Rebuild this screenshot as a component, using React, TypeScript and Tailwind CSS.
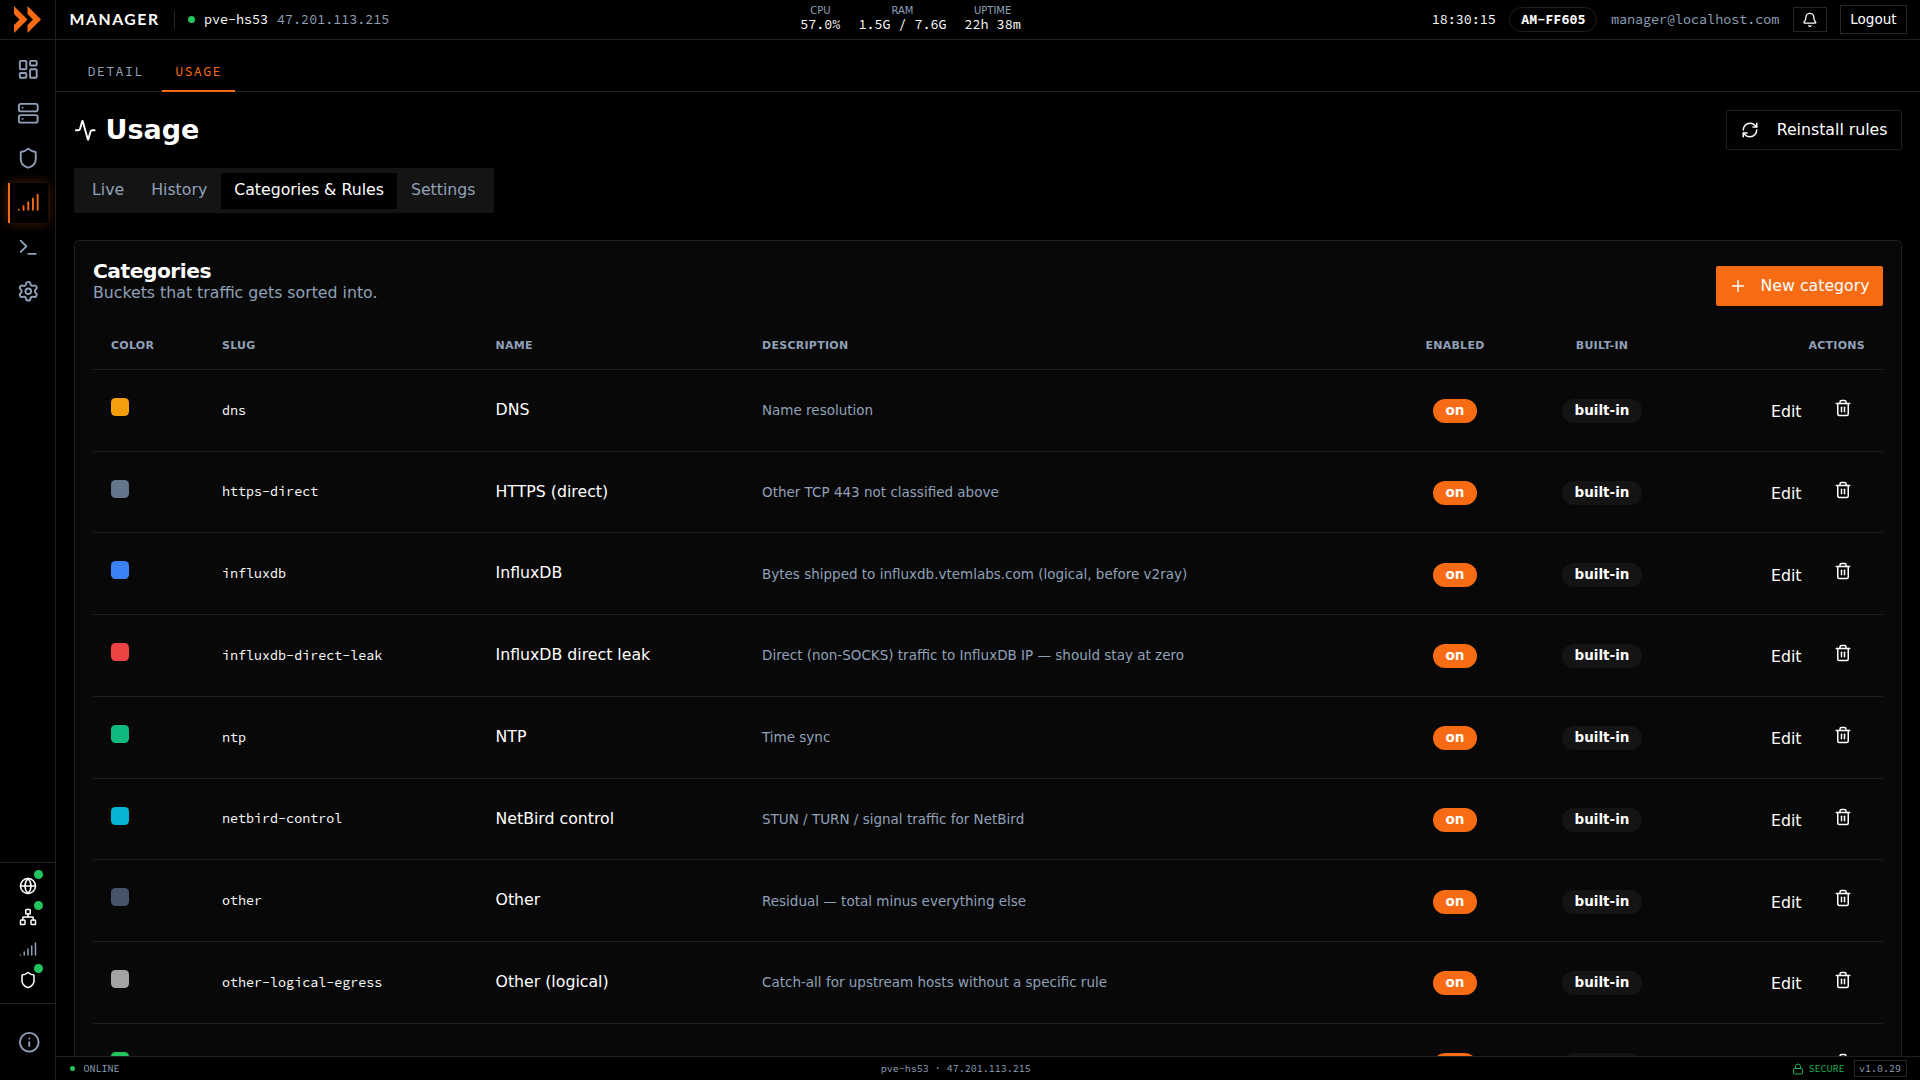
import {
  Activity,
  Bell,
  Globe,
  Info,
  LayoutDashboard,
  Lock,
  Network,
  Plus,
  RefreshCw,
  Server,
  Settings,
  Shield,
  Signal,
  Terminal,
  Trash2,
} from 'lucide-react'
import type { LucideIcon } from 'lucide-react'

// ============================================
// DATA
// ============================================

interface Category {
  color: string
  slug: string
  name: string
  description: string
}

const CATEGORIES: Category[] = [
  { color: 'bg-[#f59e0b]', slug: 'dns', name: 'DNS', description: 'Name resolution' },
  { color: 'bg-[#64748b]', slug: 'https-direct', name: 'HTTPS (direct)', description: 'Other TCP 443 not classified above' },
  { color: 'bg-[#3b82f6]', slug: 'influxdb', name: 'InfluxDB', description: 'Bytes shipped to influxdb.vtemlabs.com (logical, before v2ray)' },
  { color: 'bg-[#ef4444]', slug: 'influxdb-direct-leak', name: 'InfluxDB direct leak', description: 'Direct (non-SOCKS) traffic to InfluxDB IP — should stay at zero' },
  { color: 'bg-[#10b981]', slug: 'ntp', name: 'NTP', description: 'Time sync' },
  { color: 'bg-[#06b6d4]', slug: 'netbird-control', name: 'NetBird control', description: 'STUN / TURN / signal traffic for NetBird' },
  { color: 'bg-[#475569]', slug: 'other', name: 'Other', description: 'Residual — total minus everything else' },
  { color: 'bg-[#a3a3a3]', slug: 'other-logical-egress', name: 'Other (logical)', description: 'Catch-all for upstream hosts without a specific rule' },
  { color: 'bg-[#22c55e]', slug: '', name: '', description: '' },
]

const NAV: { icon: LucideIcon; active?: boolean }[] = [
  { icon: LayoutDashboard },
  { icon: Server },
  { icon: Shield },
  { icon: Signal, active: true },
  { icon: Terminal },
  { icon: Settings },
]

const SERVICES: { icon: LucideIcon; online: boolean }[] = [
  { icon: Globe, online: true },
  { icon: Network, online: true },
  { icon: Signal, online: false },
  { icon: Shield, online: true },
]

const STATS = [
  { label: 'CPU', value: '57.0%' },
  { label: 'RAM', value: '1.5G / 7.6G' },
  { label: 'UPTIME', value: '22h 38m' },
]

const TABS = ['Live', 'History', 'Categories & Rules', 'Settings']

// ============================================
// SIDEBAR
// ============================================

function Sidebar() {
  return (
    <aside className="flex w-[56px] shrink-0 flex-col border-r border-[#1f1f1f]">
      <div className="flex h-[40px] shrink-0 items-center justify-center border-b border-[#1f1f1f]">
        <svg viewBox="0 0 27 27" className="h-[27px] w-[27px]" fill="#f76b15">
          <path d="M0 0L13.5 13.5L0 27V19L5.5 13.5L0 8Z" />
          <path d="M13.5 0L27 13.5L13.5 27V19L19 13.5L13.5 8Z" />
        </svg>
      </div>

      <nav className="flex flex-1 flex-col items-center gap-1 py-2">
        {NAV.map(({ icon: Icon, active }, i) => (
          <button
            key={i}
            className={
              active
                ? 'flex h-[40px] w-[40px] items-center justify-center border-l-2 border-[#f76b15] bg-black text-[#f76b15] shadow-[0_0_10px_rgba(247,107,21,0.3)]'
                : 'flex h-[40px] w-[40px] items-center justify-center border-l-2 border-transparent text-slate-400'
            }
          >
            <Icon className="h-5 w-5" />
          </button>
        ))}
      </nav>

      <div className="flex flex-col items-center gap-1 border-t border-[#1f1f1f] py-2">
        {SERVICES.map(({ icon: Icon, online }, i) => (
          <div key={i} className="relative flex h-6 w-6 items-center justify-center">
            <Icon className={online ? 'h-4 w-4 text-white' : 'h-4 w-4 text-slate-400'} />
            {online && <span className="absolute -right-0.5 -top-0.5 h-2 w-2 rounded-full bg-[#22c55e]" />}
          </div>
        ))}
      </div>

      <div className="flex h-[77.5px] shrink-0 items-center justify-center border-t border-[#1f1f1f] pl-[2px]">
        <button className="flex h-[40px] w-[40px] items-center justify-center border-l-2 border-transparent text-slate-400">
          <Info className="h-5 w-5" />
        </button>
      </div>
    </aside>
  )
}

// ============================================
// TOP BAR
// ============================================

function TopBar() {
  return (
    <header className="flex h-[40px] shrink-0 items-center justify-between border-b border-[#1f1f1f] px-3 font-['Source_Code_Pro','Noto_Sans_Mono',monospace] text-[13.36px] leading-[18px]">
      <div className="flex items-center">
        <span className="font-['Lato',sans-serif] text-sm font-bold tracking-widest">MANAGER</span>
        <span className="ml-[14px] h-4 w-px bg-[#262626]" />
        <span className="ml-3 h-1.5 w-1.5 rounded-full bg-[#22c55e]" />
        <span className="ml-2">pve-hs53</span>
        <span className="ml-2 text-slate-400">47.201.113.215</span>
      </div>

      <div className="flex gap-4 pb-[2px]">
        {STATS.map((s) => (
          <div key={s.label} className="flex flex-col items-center">
            <span className="font-['DejaVu_Sans',sans-serif] text-[10px] leading-[12px] text-slate-400">{s.label}</span>
            <span className="leading-[16px]">{s.value}</span>
          </div>
        ))}
      </div>

      <div className="flex items-center gap-3">
        <span>18:30:15</span>
        <span className="flex h-[25px] items-center rounded-full border border-[#1f1f1f] px-[11px] font-bold">AM-FF605</span>
        <span className="text-slate-400">manager@localhost.com</span>
        <button className="flex h-[25px] w-[34px] items-center justify-center border border-[#262626]">
          <Bell className="h-3.5 w-3.5" />
        </button>
        <button className="flex h-[29px] items-center border border-[#262626] px-2 font-['DejaVu_Sans',sans-serif] text-xs">
          Logout
        </button>
      </div>
    </header>
  )
}

// ============================================
// CATEGORIES CARD
// ============================================

function CategoryRow({ color, slug, name, description }: Category) {
  return (
    <tr className="h-[81.75px] border-b border-[#1f1f1f]">
      <td className="px-4">
        <span className={`mb-1.5 block h-4 w-4 rounded ${color}`} />
      </td>
      <td className="px-4 pt-px font-['Source_Code_Pro','Noto_Sans_Mono',monospace] text-[13.36px]">{slug}</td>
      <td className="px-4 text-sm">{name}</td>
      <td className="px-4 pt-[2px] text-xs text-slate-400">{description}</td>
      <td className="px-4 pb-px text-center">
        <span className="inline-flex h-[24px] items-center rounded-full bg-[#f76b15] px-[13px] align-middle text-xs font-bold">on</span>
      </td>
      <td className="px-4 pb-px text-center">
        <span className="inline-flex h-[24px] items-center rounded-full bg-[#141414] px-[13px] align-middle text-xs font-bold">built-in</span>
      </td>
      <td className="px-4">
        <div className="flex items-center justify-end gap-[5px]">
          <button className="px-3 pt-1 text-sm">Edit</button>
          <button className="px-3 pb-1">
            <Trash2 className="h-4 w-4" />
          </button>
        </div>
      </td>
    </tr>
  )
}

function CategoriesCard() {
  return (
    <section className="mt-6 rounded border border-[#1f1f1f] bg-[#080808] p-4">
      <div className="flex h-[54px] items-center justify-between">
        <div className="self-start">
          <h2 className="pt-[2px] text-lg font-bold leading-[21px] tracking-tight">Categories</h2>
          <p className="text-sm text-slate-400">Buckets that traffic gets sorted into.</p>
        </div>
        <button className="flex h-[40px] items-center rounded-[2px] bg-[#f76b15] px-3 text-sm">
          <Plus className="mr-3 h-4 w-4" />
          New category
        </button>
      </div>

      <table className="w-full table-fixed border-collapse">
        <colgroup>
          <col className="w-[111px]" />
          <col className="w-[273.5px]" />
          <col className="w-[266.5px]" />
          <col />
          <col className="w-[140px]" />
          <col className="w-[154px]" />
          <col className="w-[204px]" />
        </colgroup>
        <thead>
          <tr className="h-[56.25px] border-b border-[#1f1f1f] text-left text-[11px] font-bold uppercase tracking-wide text-slate-400">
            <th className="px-4 pt-[10px]">Color</th>
            <th className="px-4 pt-[10px]">Slug</th>
            <th className="px-4 pt-[10px]">Name</th>
            <th className="px-4 pt-[10px]">Description</th>
            <th className="px-4 pt-[10px] text-center">Enabled</th>
            <th className="px-4 pt-[10px] text-center">Built-in</th>
            <th className="px-4 pt-[10px] text-right">Actions</th>
          </tr>
        </thead>
        <tbody>
          {CATEGORIES.map((c) => (
            <CategoryRow key={c.color} {...c} />
          ))}
        </tbody>
      </table>
    </section>
  )
}

// ============================================
// FOOTER
// ============================================

function StatusBar() {
  return (
    <footer className="flex h-[24px] shrink-0 items-center justify-between border-t border-[#1f1f1f] bg-black px-3 font-['Source_Code_Pro','Noto_Sans_Mono',monospace] text-[10px] text-slate-400">
      <div className="flex items-center gap-2">
        <span className="h-[5px] w-[5px] rounded-full bg-[#22c55e]" />
        ONLINE
      </div>
      <div>pve-hs53 · 47.201.113.215</div>
      <div className="flex items-center gap-2">
        <span className="flex items-center gap-1 text-[#1fb356]">
          <Lock className="h-[12px] w-[12px]" />
          SECURE
        </span>
        <span className="border border-[#262626] px-1 leading-[15px]">v1.0.29</span>
      </div>
    </footer>
  )
}

// ============================================
// PAGE
// ============================================

export default function App() {
  return (
    <div className="flex h-screen overflow-hidden bg-black font-['DejaVu_Sans',sans-serif] text-white">
      {/* The whole interface scales from an 18px root */}
      <style>{'html { font-size: 18px; }'}</style>

      <Sidebar />

      <div className="flex min-w-0 flex-1 flex-col">
        <TopBar />

        {/* Section tabs */}
        <div className="flex h-[52px] shrink-0 items-end gap-1 border-b border-[#1f1f1f] px-4 font-['Source_Code_Pro','Noto_Sans_Mono',monospace] text-[13.36px] leading-[18px] tracking-widest">
          <span className="-mb-px border-b-2 border-transparent px-3 pb-2 text-slate-400">DETAIL</span>
          <span className="-mb-px border-b-2 border-[#f76b15] px-3 pb-2 text-[#f76b15]">USAGE</span>
        </div>

        <main className="min-h-0 flex-1 overflow-hidden p-4">
          <div className="flex items-center justify-between">
            <h1 className="flex items-center gap-2 text-2xl font-bold">
              <Activity className="h-5 w-5" />
              Usage
            </h1>
            <button className="flex h-[40px] items-center rounded-[2px] border border-[#1f1f1f] px-3 text-sm">
              <RefreshCw className="mr-4 h-4 w-4" />
              Reinstall rules
            </button>
          </div>

          <div className="mt-4 inline-flex h-10 items-center rounded-[2px] bg-[#141414] p-1 align-top text-sm">
            {TABS.map((tab) => (
              <button
                key={tab}
                className={tab === 'Categories & Rules' ? 'bg-black px-3 py-1.5 text-white' : 'px-3 py-1.5 text-slate-400'}
              >
                {tab}
              </button>
            ))}
          </div>

          <CategoriesCard />
        </main>

        <StatusBar />
      </div>
    </div>
  )
}
